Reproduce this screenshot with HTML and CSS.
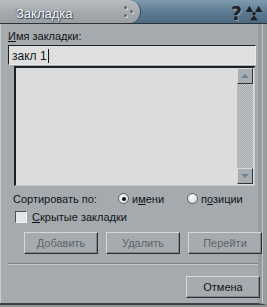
FILE: index.html
```html
<!DOCTYPE html>
<html lang="ru">
<head>
    <meta charset="UTF-8">
    <title>Закладка</title>
    <link rel="stylesheet" href="styles.css">
</head>
<body>
    <div class="window">
        <div class="titlebar">
            <div class="tab">
                <span class="title">Закладка</span>
                <span class="grip"><i></i><i></i><i></i></span>
            </div>
            <div class="controls">
                <span class="help">?</span>
                <svg class="close" width="18" height="16" viewBox="0 0 16 14">
                    <polygon points="4,0.5 0.5,6 7,6" fill="#1d2226"/>
                    <polygon points="12,0.5 15.5,6 9,6" fill="#1d2226"/>
                    <circle cx="8" cy="7.5" r="1.5" fill="#1d2226"/>
                    <polygon points="8,9 4.5,13.5 11.5,13.5" fill="#1d2226"/>
                </svg>
            </div>
        </div>
        <div class="body">
            <div class="content">
                <div class="label"><u>И</u>мя закладки:</div>
                <div class="textbox">закл 1<span class="caret"></span></div>
                <div class="listbox">
                    <div class="items"></div>
                    <div class="scrollbar">
                        <div class="sbtn"><span class="arrow up"></span></div>
                        <div class="track"></div>
                        <div class="sbtn"><span class="arrow down"></span></div>
                    </div>
                </div>
                <div class="sort-row">
                    <span class="sort-label">Сортировать по:</span>
                    <span class="radio checked"></span>
                    <span class="opt">и<u>м</u>ени</span>
                    <span class="radio"></span>
                    <span class="opt">п<u>о</u>зиции</span>
                </div>
                <div class="check-row">
                    <span class="checkbox"></span>
                    <span><u>С</u>крытые закладки</span>
                </div>
                <div class="buttons">
                    <button class="btn" disabled>Добавить</button>
                    <button class="btn" disabled>Удалить</button>
                    <button class="btn" disabled>Перейти</button>
                </div>
                <div class="separator"></div>
                <div class="footer">
                    <button class="btn">Отмена</button>
                </div>
            </div>
        </div>
    </div>
</body>
</html>
```

FILE: styles.css
```css
body {
    margin: 0;
    font-family: "Liberation Sans", Arial, sans-serif;
    font-size: 11px;
    color: #101418;
    background-color: #a5aaae;
}
.window {
    width: 267px;
    height: 307px;
    display: flex;
    flex-direction: column;
    overflow: hidden;
}
.titlebar {
    height: 24px;
    display: flex;
    background: linear-gradient(#7f9aae, #5b7a90 55%, #4d6b80);
    border-bottom: 1px solid #2a3238;
    box-sizing: border-box;
}
.tab {
    width: 141px;
    display: flex;
    align-items: center;
    justify-content: space-between;
    background: linear-gradient(#b7bcc0, #a3a8ac 60%, #9a9fa3);
    border-radius: 0 14px 14px 0;
    border-right: 1px solid #3e4a52;
    box-sizing: border-box;
}
.title {
    margin-left: 16px;
    padding-top: 3px;
    font-size: 13px;
    color: #f4f6f8;
    text-shadow: 1px 1px 1px #2c3a46, -1px 0 1px #5a6874;
}
.grip {
    width: 12px;
    height: 14px;
    margin-right: 5px;
    position: relative;
}
.grip i {
    position: absolute;
    width: 3px;
    height: 3px;
    border-radius: 50%;
    background-color: #5e6870;
    box-shadow: 1px 1px 0 #d8dcde;
}
.grip i:nth-child(1) { left: 1px; top: 1px; }
.grip i:nth-child(2) { left: 7px; top: 5px; }
.grip i:nth-child(3) { left: 1px; top: 9px; }
.controls {
    flex: 1;
    display: flex;
    justify-content: flex-end;
    align-items: center;
    gap: 3px;
    padding: 3px 4px 0 0;
}
.help {
    font-family: "DejaVu Sans", sans-serif;
    font-weight: bold;
    font-size: 19px;
    line-height: 19px;
    color: #1d2226;
    text-shadow: 1px 1px 0 #8ea4b4;
}
.close {
    display: block;
}
.body {
    flex: 1;
    display: flex;
    border-right: 9px solid #969ca0;
    border-bottom: 2px solid #3a4248;
    box-shadow: inset 1px 0 0 #c8ccce, 0 2px 0 #8d9397;
    margin-bottom: 2px;
}
.content {
    flex: 1;
    border-right: 1px solid #c2c6c8;
    padding: 6px 0 0 8px;
}
.label {
    height: 14px;
}
.textbox {
    margin-top: 1px;
    width: 248px;
    height: 20px;
    box-sizing: border-box;
    background-color: #dfdfdf;
    border: 1px solid #e8eaea;
    border-top-color: #1b2024;
    border-left-color: #1b2024;
    padding: 3px 0 0 3px;
    font-size: 12px;
    display: flex;
    align-items: flex-start;
}
.caret {
    display: inline-block;
    width: 1px;
    height: 14px;
    margin-left: 1px;
    background-color: #101418;
}
.listbox {
    margin: 1px 0 0 6px;
    width: 241px;
    height: 120px;
    box-sizing: border-box;
    display: flex;
    background-color: #dcdcdc;
    border: 1px solid #c4c8ca;
    border-top: 2px solid #1b2024;
    border-left: 2px solid #1b2024;
}
.items {
    flex: 1;
}
.scrollbar {
    width: 16px;
    display: flex;
    flex-direction: column;
    margin: 0 1px 1px 0;
}
.track {
    flex: 1;
    background-color: #b0b4b8;
    background-image: repeating-conic-gradient(#c6c9cc 0 25%, #a2a6aa 0 50%);
    background-size: 2px 2px;
}
.sbtn {
    height: 16px;
    box-sizing: border-box;
    display: flex;
    align-items: center;
    justify-content: center;
    background-color: #a8adb1;
    border: 1px solid #2c3438;
    border-top-color: #d6dadc;
    border-left-color: #d6dadc;
}
.arrow {
    width: 0;
    height: 0;
    border-left: 4px solid transparent;
    border-right: 4px solid transparent;
}
.arrow.up {
    border-bottom: 4px solid #6c8496;
}
.arrow.down {
    border-top: 4px solid #6c8496;
}
.sort-row {
    margin: 6px 0 0 5px;
    height: 13px;
    display: flex;
    align-items: center;
}
.sort-label {
    width: 105px;
}
.radio {
    width: 11px;
    height: 11px;
    box-sizing: border-box;
    border-radius: 50%;
    background: radial-gradient(circle at 40% 40%, #fbfbfb, #cfd2d4);
    border: 1px solid #5a6268;
    margin-right: 3px;
    display: flex;
    align-items: center;
    justify-content: center;
}
.radio.checked::after {
    content: "";
    width: 4px;
    height: 4px;
    border-radius: 50%;
    background-color: #0a0c0e;
}
.opt {
    width: 55px;
}
.check-row {
    margin: 6px 0 0 7px;
    display: flex;
    align-items: center;
    gap: 5px;
}
.checkbox {
    width: 12px;
    height: 12px;
    box-sizing: border-box;
    background-color: #e4e5e6;
    border: 1px solid #f2f3f4;
    border-top-color: #4a5258;
    border-left-color: #4a5258;
}
.buttons {
    margin: 9px 0 0 16px;
    display: flex;
    gap: 8px;
}
.btn {
    width: 74px;
    height: 22px;
    margin: 0;
    padding: 0;
    font-family: inherit;
    font-size: 11px;
    color: #101418;
    background-color: #a6abaf;
    border: 1px solid #2a3034;
    border-top-color: #d4d8da;
    border-left-color: #d4d8da;
    box-shadow: inset -1px -1px 0 #7e8489;
}
.btn:disabled {
    color: #5c646b;
}
.separator {
    margin: 9px 0 0 0;
    width: 250px;
    height: 1px;
    background-color: #7b8287;
    border-bottom: 1px solid #c4c8ca;
}
.footer {
    margin-top: 11px;
    display: flex;
    justify-content: flex-end;
    width: 252px;
}
```
